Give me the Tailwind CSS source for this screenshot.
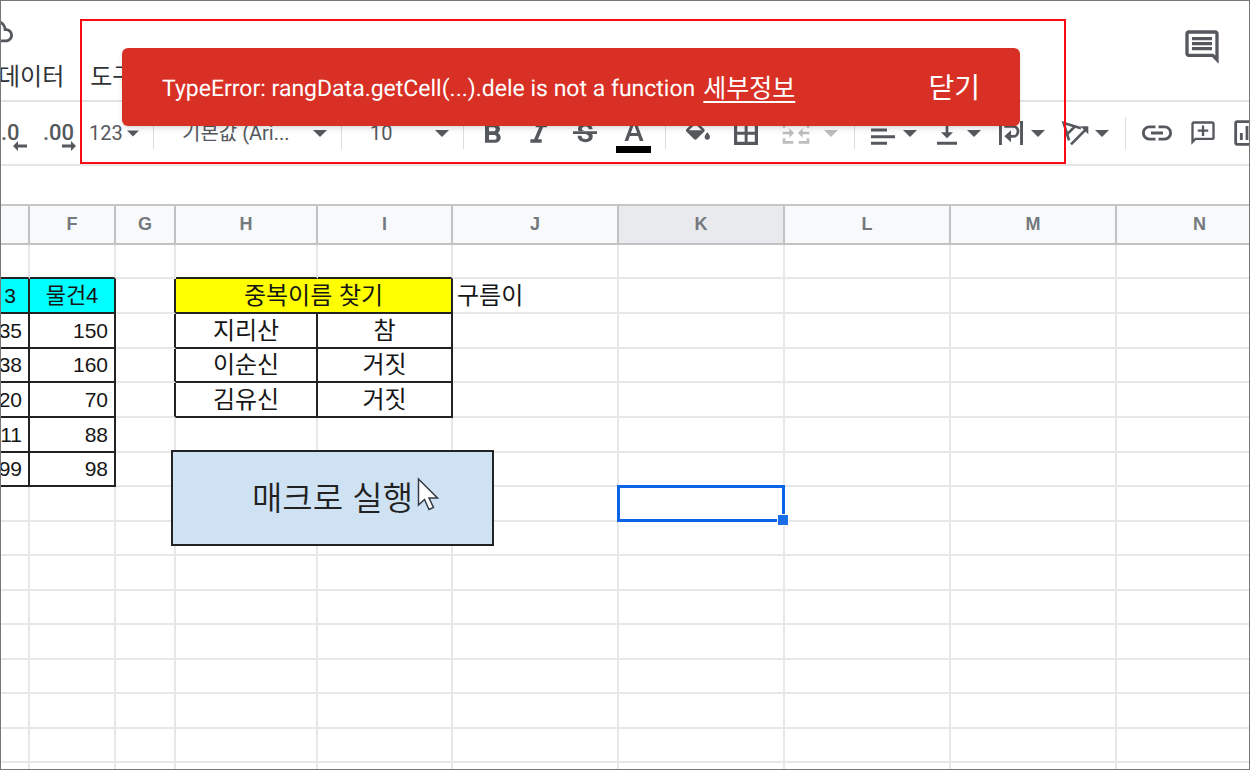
<!DOCTYPE html>
<html lang="ko">
<head>
<meta charset="utf-8">
<title>스프레드시트</title>
<script src="https://cdn.jsdelivr.net/npm/@tailwindcss/browser@4"></script>
</head>
<body class="relative h-screen overflow-hidden border border-[#777] bg-white font-['Roboto','Noto_Sans_CJK_KR',sans-serif] text-[#55595e]">
<svg class="hidden">
  <symbol id="tri" viewBox="0 0 14 7"><path fill="currentColor" d="M0 0h14L7 7z"/></symbol>
</svg>

<header class="relative flex h-[101px] flex-col border-b-2 border-[#e1e3e6]">
  <div class="flex h-[60px] items-center">
    <svg class="-ml-[22px] h-[34px] w-[34px]" viewBox="0 0 24 24" fill="currentColor"><path d="M19.35 10.04C18.67 6.59 15.64 4 12 4 9.11 4 6.6 5.64 5.35 8.04 2.34 8.36 0 10.91 0 14c0 3.31 2.69 6 6 6h13c2.76 0 5-2.24 5-5 0-2.64-2.05-4.78-4.65-4.96zM19 18H6c-2.21 0-4-1.79-4-4s1.79-4 4-4h.71C7.37 7.69 9.48 6 12 6c3.04 0 5.5 2.46 5.5 5.5v.5H19c1.66 0 3 1.34 3 3s-1.34 3-3 3z"/><path d="m9.500 16.500-3.500-3.500 1.400-1.400 2.100 2.100 5-5 1.400 1.400z"/></svg>
  </div>
  <nav class="-ml-[3px] flex gap-[26px] text-2xl leading-8 text-[#303438]">
    <button>데이터</button>
    <button>도구</button>
  </nav>
  <button aria-label="댓글 기록" class="absolute top-[26px] right-[27px]">
    <svg class="h-10 w-10" viewBox="0 0 24 24" fill="currentColor"><path d="M21.990 4c0-1.100-.890-2-1.990-2H4c-1.100 0-2 .900-2 2v12c0 1.100.900 2 2 2h14l4 4-.010-18zM20 4v13.170L18.830 16H4V4h16zM6 12h12v2H6zm0-3h12v2H6zm0-3h12v2H6z"/></svg>
  </button>
</header>

<div role="toolbar" class="flex h-16 items-center overflow-hidden border-b-2 border-[#e4e6e9] *:shrink-0">
  <button class="relative h-8 w-8 text-left text-[22px] leading-8 font-medium">.0
    <svg class="absolute top-6 left-3 h-2.5 w-3.5" viewBox="0 0 14 10" fill="currentColor"><path d="M5 0v3.500h9v3H5V10L0 5z"/></svg>
  </button>
  <button class="relative h-8 w-[54px] pl-2.5 text-left text-[22px] leading-8 font-medium">.00
    <svg class="absolute top-6 left-[29px] h-2.5 w-3.5" viewBox="0 0 14 10" fill="currentColor"><path d="M9 0v3.500H0v3h9V10l5-5z"/></svg>
  </button>
  <button class="flex w-[66px] items-center gap-1 pl-0.5 text-xl">123<svg class="h-[7px] w-3"><use href="#tri"/></svg></button>
  <span class="h-8 w-px bg-[#dadce0]"></span>
  <button class="flex w-[187px] items-center justify-between pr-3.5 pl-7 text-xl">기본값 (Ari...<svg class="h-[7px] w-3.5"><use href="#tri"/></svg></button>
  <span class="h-8 w-px bg-[#dadce0]"></span>
  <button class="flex w-[121px] items-center justify-between pr-3.5 pl-7 text-xl">10<svg class="h-[7px] w-3.5"><use href="#tri"/></svg></button>
  <span class="h-8 w-px bg-[#dadce0]"></span>
  <div class="flex items-center pt-px pr-1.5 pl-1.5 *:flex *:w-[46px] *:justify-center">
    <button aria-label="굵게"><svg class="h-8 w-8" viewBox="0 0 24 24" fill="currentColor"><path d="M15.600 11.290c.970-.670 1.650-1.770 1.650-2.790 0-2.260-1.750-4-4-4H6v14h8.040c2.090 0 3.710-1.700 3.710-3.790 0-1.520-.860-2.820-2.150-3.420zM9 7h3.500c.830 0 1.500.670 1.500 1.500S13.330 10 12.500 10H9V7zm4 9.300H9v-3.500h4c.900 0 1.700.800 1.700 1.750s-.800 1.750-1.700 1.750z"/></svg></button>
    <button aria-label="기울임꼴"><svg class="h-8 w-8" viewBox="0 0 24 24" fill="currentColor"><path d="M9.500 4.500V7h2.700l-3.900 9H5.500v2.500h8.500V16h-2.800l3.900-9H18V4.500z"/></svg></button>
    <button aria-label="취소선"><svg class="h-8 w-8" viewBox="0 0 24 24" fill="currentColor"><path d="M7.200 9.800c-1.200-2.300.300-5 2.900-5.500 3.100-.7 7.600.4 7.600 4.200h-3c0-.3 0-.6-.1-.8-.600-1.900-5-1.700-5 .6.300.9 1.100 1.200 1.900 1.500H7.300zM21 12v-2H3v2h9.600c1.100.4 2.200.8 2.200 2 0 1.100-.9 1.900-2.500 1.900-2 0-2.900-1-2.900-2.500H6.500c0 3.600 3.300 4.700 5.800 4.700 3 0 5.500-1.300 5.500-4.200 0-.7-.1-1.300-.4-1.900H21z"/></svg></button>
    <button aria-label="텍스트 색상" class="w-[50px]!"><svg class="h-10 w-9 shrink-0" viewBox="0 0 36 40"><path fill="currentColor" d="M17 7h4l7.500 20h-3.700l-1.700-5h-8.200l-1.700 5H9.500zm-1.100 12h6.200L19 10z"/><path fill="#000" d="M1 32h35v7H1z"/></svg></button>
  </div>
  <span class="ml-px h-8 w-px bg-[#dadce0]"></span>
  <div class="flex items-center pr-3 pl-2">
    <button aria-label="채우기 색상" class="flex w-12 justify-center"><svg class="h-8 w-8" viewBox="0 0 24 24" fill="currentColor"><path d="M16.560 8.940 7.620 0 6.210 1.410l2.380 2.380-5.150 5.150c-.590.590-.590 1.540 0 2.120l5.500 5.500c.290.290.680.440 1.060.440s.770-.150 1.060-.440l5.500-5.500c.590-.580.590-1.530 0-2.120zM5.210 10 10 5.210 14.790 10H5.210zM19 11.500s-2 2.170-2 3.500c0 1.100.900 2 2 2s2-.900 2-2c0-1.330-2-3.500-2-3.500z"/></svg></button>
    <button aria-label="테두리" class="flex w-12 justify-center"><svg class="h-8 w-8" viewBox="0 0 24 24" fill="currentColor"><path d="M3 3v18h18V3H3zm8 15.600H5.400v-5.200H11v5.200zm0-7.600H5.400V5.400H11V11zm7.600 7.600H13.200v-5.200h5.400v5.200zm0-7.600H13.200V5.400h5.400V11z"/></svg></button>
    <button aria-label="셀 병합" class="flex w-[72px] items-center gap-3 pl-2.5 text-[#bcbec0]"><svg class="h-8 w-8 shrink-0" viewBox="0 0 24 24" fill="currentColor"><path d="M2 4h8v2H4v2H2zm12 0h8v4h-2V6h-6zM2 16h2v2h6v2H2zm18 0h2v4h-8v-2h6zM2 11h5V8.500L10.500 12 7 15.500V13H2zm20 0h-5V8.500L13.500 12l3.500 3.500V13h5z"/></svg><svg class="h-[7px] w-3.5 shrink-0"><use href="#tri"/></svg></button>
  </div>
  <span class="h-8 w-px bg-[#dadce0]"></span>
  <div class="flex pl-3 *:flex *:w-16 *:items-center *:gap-1">
    <button aria-label="가로 맞춤"><svg class="h-8 w-8" viewBox="0 0 24 24" fill="currentColor"><path d="M3 3.500h18v2.300H3zm0 5.100h12v2.300H3zm0 5h18v2.300H3zm0 5h12v2.300H3z"/></svg><svg class="h-[7px] w-3.5"><use href="#tri"/></svg></button>
    <button aria-label="세로 맞춤"><svg class="h-8 w-8" viewBox="0 0 24 24" fill="currentColor"><path d="M16.500 11.500H13V3h-2v8.500H7.500L12 16zM4.500 18.500v2.300h15v-2.300z"/></svg><svg class="h-[7px] w-3.5"><use href="#tri"/></svg></button>
    <button aria-label="텍스트 줄바꿈"><svg class="h-8 w-8" viewBox="0 0 24 24" fill="currentColor"><path d="M3 3h2.200v18H3zm15.800 0H21v18h-2.200zM7 6h6.500a4.800 4.800 0 0 1 0 9.600H12V19l-5-4.500L12 10v3.500h1.500a2.700 2.700 0 0 0 0-5.400H7z"/></svg><svg class="h-[7px] w-3.5"><use href="#tri"/></svg></button>
    <button aria-label="텍스트 회전"><svg class="h-8 w-8" viewBox="0 0 24 24" fill="none" stroke="currentColor" stroke-width="2"><path d="m7.500 17.500-4-13 13 4M6 13l5.500-5.500M9 20.500 20 9.500"/><path fill="currentColor" stroke="none" d="M16 7h6v6z"/></svg><svg class="h-[7px] w-3.5"><use href="#tri"/></svg></button>
  </div>
  <span class="ml-0.5 h-8 w-px bg-[#dadce0]"></span>
  <div class="flex pl-2 *:flex *:w-[46px] *:shrink-0 *:items-center *:justify-center">
    <button aria-label="링크 삽입"><svg class="h-9 w-9" viewBox="0 0 24 24" fill="currentColor"><path d="M3.900 12c0-1.710 1.390-3.100 3.100-3.100h4V7H7c-2.760 0-5 2.240-5 5s2.240 5 5 5h4v-1.900H7c-1.710 0-3.100-1.390-3.100-3.100zM8 13h8v-2H8v2zm9-6h-4v1.900h4c1.710 0 3.100 1.390 3.100 3.100s-1.390 3.100-3.100 3.100h-4V17h4c2.760 0 5-2.240 5-5s-2.240-5-5-5z"/></svg></button>
    <button aria-label="댓글 삽입"><svg class="h-7 w-7" viewBox="0 0 24 24" fill="currentColor"><path d="M20 2H4c-1.100 0-2 .900-2 2v18l4-4h14c1.100 0 2-.900 2-2V4c0-1.100-.900-2-2-2zm0 14H5.200L4 17.200V4h16zM11 14.500h2v-3.500h3.500V9H13V5.500h-2V9H7.500v2H11z"/></svg></button>
    <button aria-label="차트 삽입"><svg class="mr-1 h-[34px] w-[34px] shrink-0" viewBox="0 0 24 24" fill="currentColor"><path d="M19 3H5c-1.100 0-2 .900-2 2v14c0 1.100.900 2 2 2h14c1.100 0 2-.900 2-2V5c0-1.100-.900-2-2-2zm0 16H5V5h14zM7 12h2v5H7zm4-5h2v10h-2zm4 6h2v4h-2z"/></svg></button>
  </div>
</div>

<main class="relative mt-[38px] overflow-hidden">
  <table class="w-[1283px] table-fixed border-separate border-spacing-0 border-t-2 border-[#c6c6c6] text-center font-['Liberation_Sans','Noto_Sans_CJK_KR',sans-serif] text-[21px] leading-7 text-[#161616] [&_td]:border-r-2 [&_td]:border-b-2 [&_td]:border-[#e7e7e7] [&_th]:border-r-2 [&_th]:border-b-2 [&_th]:border-[#c2c2c2]">
    <colgroup><col class="w-[29px]"><col class="w-[86px]"><col class="w-[60px]"><col class="w-[142px]"><col class="w-[135px]"><col class="w-[166px]"><col class="w-[166px]"><col class="w-[166px]"><col class="w-[166px]"><col class="w-[167px]"></colgroup>
    <thead><tr class="h-[39px] bg-[#f8f9fa] text-lg text-[#75797e] [&_th]:pb-0.5"><th></th><th>F</th><th>G</th><th>H</th><th>I</th><th>J</th><th class="bg-[#e8eaed]">K</th><th>L</th><th>M</th><th>N</th></tr></thead>
    <tbody>
      <tr class="h-[34px]"><td class="border-b-[#222]!"></td><td class="border-b-[#222]!"></td><td></td><td class="border-b-[#222]!"></td><td class="border-b-[#222]!"></td><td></td><td></td><td></td><td></td><td></td></tr>
      <tr class="h-[35px]"><td class="border-[#222]! bg-[#00ffff] pr-3 text-right">3</td><td class="border-[#222]! bg-[#00ffff] text-[22px]">물건4</td><td class="border-r-[#222]!"></td><td colspan="2" class="border-[#222]! bg-[#ffff00] text-2xl">중복이름 찾기</td><td class="pl-1 text-left text-2xl">구름이</td><td></td><td></td><td></td><td></td></tr>
      <tr class="h-[35px]"><td class="border-[#222]!"><div class="flex justify-end pr-1.5">35</div></td><td class="border-[#222]! pr-1.5 text-right">150</td><td class="border-r-[#222]!"></td><td class="border-[#222]! text-2xl">지리산</td><td class="border-[#222]! text-2xl">참</td><td></td><td></td><td></td><td></td><td></td></tr>
      <tr class="h-[34px]"><td class="border-[#222]!"><div class="flex justify-end pr-1.5">38</div></td><td class="border-[#222]! pr-1.5 text-right">160</td><td class="border-r-[#222]!"></td><td class="border-[#222]! text-2xl">이순신</td><td class="border-[#222]! text-2xl">거짓</td><td></td><td></td><td></td><td></td><td></td></tr>
      <tr class="h-[35px]"><td class="border-[#222]!"><div class="flex justify-end pr-1.5">20</div></td><td class="border-[#222]! pr-1.5 text-right">70</td><td class="border-r-[#222]!"></td><td class="border-[#222]! text-2xl">김유신</td><td class="border-[#222]! text-2xl">거짓</td><td></td><td></td><td></td><td></td><td></td></tr>
      <tr class="h-[35px]"><td class="border-[#222]!"><div class="flex justify-end pr-1.5">11</div></td><td class="border-[#222]! pr-1.5 text-right">88</td><td></td><td></td><td></td><td></td><td></td><td></td><td></td><td></td></tr>
      <tr class="h-[34px]"><td class="border-[#222]!"><div class="flex justify-end pr-1.5">99</div></td><td class="border-[#222]! pr-1.5 text-right">98</td><td></td><td></td><td></td><td></td><td></td><td></td><td></td><td></td></tr>
      <tr class="h-[35px]"><td></td><td></td><td></td><td></td><td></td><td></td>
        <td class="relative"><div class="absolute -inset-0.5 border-3 border-[#0b63e8]"><span class="absolute -right-[7px] -bottom-[7px] h-3 w-3 border border-white bg-[#1a6fe8]"></span></div></td>
        <td></td><td></td><td></td></tr>
      <tr class="h-[34px]"><td></td><td></td><td></td><td></td><td></td><td></td><td></td><td></td><td></td><td></td></tr>
      <tr class="h-[35px]"><td></td><td></td><td></td><td></td><td></td><td></td><td></td><td></td><td></td><td></td></tr>
      <tr class="h-[34px]"><td></td><td></td><td></td><td></td><td></td><td></td><td></td><td></td><td></td><td></td></tr>
      <tr class="h-[35px]"><td></td><td></td><td></td><td></td><td></td><td></td><td></td><td></td><td></td><td></td></tr>
      <tr class="h-[34px]"><td></td><td></td><td></td><td></td><td></td><td></td><td></td><td></td><td></td><td></td></tr>
      <tr class="h-[35px]"><td></td><td></td><td></td><td></td><td></td><td></td><td></td><td></td><td></td><td></td></tr>
      <tr class="h-[34px]"><td></td><td></td><td></td><td></td><td></td><td></td><td></td><td></td><td></td><td></td></tr>
      <tr class="h-[35px]"><td></td><td></td><td></td><td></td><td></td><td></td><td></td><td></td><td></td><td></td></tr>
    </tbody>
  </table>
  <!-- Drawing placed on the sheet, with the pointer over it -->
  <button class="absolute top-[246px] left-[170px] h-24 w-[323px] border-2 border-[#222] bg-[#cfe2f3] pb-1 font-['Noto_Sans_CJK_KR',sans-serif] text-[33px] leading-10 font-[350] text-[#222]">매크로 실행</button>
  <svg class="absolute top-[273px] left-[416px] h-9 w-6" viewBox="0 0 24 36"><path d="M1.500 2v26l6-5.500 4.500 10 4.500-2-4.500-9.500h8.500z" fill="#fff" stroke="#333a44" stroke-width="1.500"/></svg>
</main>

<!-- Error toast -->
<div role="alert" class="absolute top-[47px] left-[121px] flex h-[78px] w-[898px] items-center rounded-md bg-[#d93025] px-10 pt-1 text-white shadow-md">
  <p class="text-[23px] leading-8 [text-rendering:geometricPrecision]">TypeError: rangData.getCell(...).dele is not a function</p>
  <a href="#" class="ml-2 text-[25px] leading-8 underline underline-offset-4">세부정보</a>
  <button class="ml-auto text-[28px] leading-8">닫기</button>
</div>
<div class="pointer-events-none absolute top-[18px] left-[79px] h-[145px] w-[986px] border-2 border-[#fa0a14]"></div>
</body>
</html>
